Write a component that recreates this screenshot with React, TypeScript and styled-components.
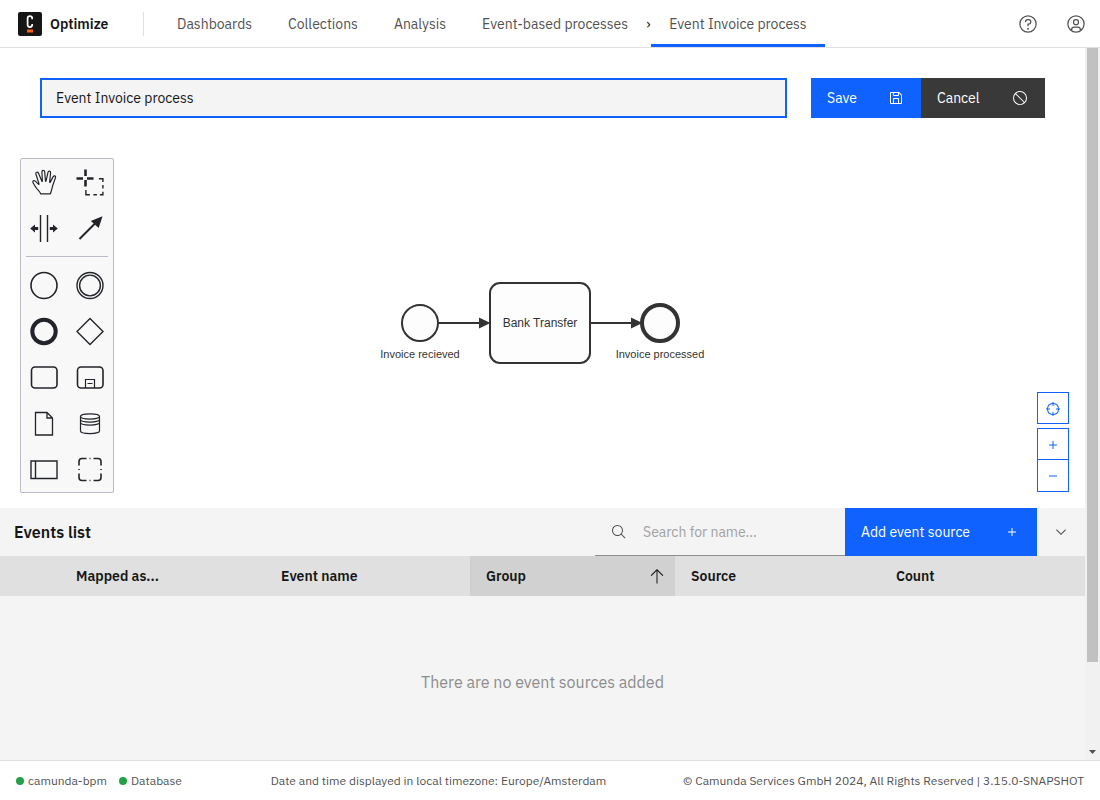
import React from 'react';
import styled, { createGlobalStyle } from 'styled-components';

const GlobalStyle = createGlobalStyle`
  *, *::before, *::after { box-sizing: border-box; }
  body {
    margin: 0;
    font-family: 'IBM Plex Sans', Roboto, 'Liberation Sans', sans-serif;
    font-size: 14px;
    line-height: 18px;
    color: #161616;
    background: #fff;
  }
  button, input { font: inherit; border-radius: 0; }
  a { color: inherit; text-decoration: none; }
`;

const Page = styled.div`
  display: flex;
  flex-direction: column;
  height: 100vh;
`;

const Header = styled.header`
  display: flex;
  align-items: center;
  flex: none;
  height: 48px;
  padding-left: 18px;
  border-bottom: 1px solid #e0e0e0;
`;

const Brand = styled.a`
  display: flex;
  align-items: center;
  gap: 8px;
  width: 125px;
  font-weight: 600;
`;

const Divider = styled.span`
  width: 1px;
  height: 24px;
  margin-right: 15px;
  background: #e0e0e0;
`;

const Nav = styled.nav`
  display: flex;
  align-self: stretch;
  flex: 1;
`;

const NavLink = styled.a<{ $active?: boolean }>`
  display: flex;
  align-items: center;
  padding: 3px 18px 0;
  border-bottom: 3px solid ${p => (p.$active ? '#0f62fe' : 'transparent')};
  color: #525252;
  white-space: nowrap;
`;

const Crumb = styled.span`
  display: flex;
  align-items: center;
  width: 5px;
`;

const HeaderButton = styled.button`
  display: grid;
  place-items: center;
  width: 48px;
  height: 48px;
  padding: 0;
  border: 0;
  background: none;
  color: #525252;
`;

const Body = styled.div`
  display: flex;
  flex: 1;
  min-height: 0;
`;

const Main = styled.main`
  display: flex;
  flex-direction: column;
  flex: 1;
  min-width: 0;
`;

const Scrollbar = styled.div`
  display: flex;
  flex-direction: column;
  justify-content: space-between;
  align-items: center;
  flex: none;
  width: 15px;
  padding-bottom: 6px;
  background: #f1f1f1;
`;

const Thumb = styled.div`
  width: 11px;
  height: 87%;
  background: #c1c1c1;
`;

const EditBar = styled.form`
  display: flex;
  gap: 24px;
  padding: 30px 40px 20px;
`;

const NameInput = styled.input`
  flex: 1;
  min-width: 0;
  height: 40px;
  padding: 0 14px;
  border: 2px solid #0f62fe;
  outline: 0;
  background: #f4f4f4;
  color: #161616;
`;

const Actions = styled.div`
  display: flex;
`;

const ActionButton = styled.button<{ $tone?: 'dark'; $tall?: boolean; $width: number }>`
  display: flex;
  align-items: center;
  justify-content: space-between;
  width: ${p => p.$width}px;
  height: ${p => (p.$tall ? 48 : 40)}px;
  padding: 0 17px 0 16px;
  border: 0;
  background: ${p => (p.$tone === 'dark' ? '#393939' : '#0f62fe')};
  color: #fff;
  white-space: nowrap;
`;

const Canvas = styled.section`
  position: relative;
  display: flex;
  align-items: center;
  justify-content: center;
  flex: 1;
  min-height: 370px;
`;

const Palette = styled.div`
  position: absolute;
  left: 20px;
  top: 20px;
  display: grid;
  grid-template-columns: 46px 46px;
  border: 1px solid #babac8;
  border-radius: 2px;
  background: #f8f8f8;
`;

const Tool = styled.button`
  height: 46px;
  padding: 0;
  border: 0;
  background: none;
  color: #22242a;

  svg { display: block; }
`;

const PaletteRule = styled.hr`
  grid-column: 1 / -1;
  height: 1px;
  margin: 5px;
  border: 0;
  background: #babac8;
`;

const ZoomControls = styled.div`
  position: absolute;
  right: 16px;
  bottom: 16px;
  display: flex;
  flex-direction: column;
`;

const ZoomButton = styled.button<{ $joined?: boolean; $apart?: boolean }>`
  display: grid;
  place-items: center;
  width: 32px;
  height: 32px;
  margin-bottom: ${p => (p.$apart ? 4 : 0)}px;
  padding: ${p => (p.$joined ? 0 : 2)}px 0 0;
  border: 1px solid #0f62fe;
  border-top-width: ${p => (p.$joined ? 0 : 1)}px;
  background: #fff;
  color: #0f62fe;
`;

const Events = styled.section`
  flex: none;
  background: #f4f4f4;
`;

const EventsBar = styled.div`
  display: flex;
  align-items: center;
  height: 48px;
  padding-left: 14px;
`;

const EventsTitle = styled.h2`
  flex: 1;
  margin: 0;
  font-size: 16px;
  font-weight: 600;
`;

const Search = styled.label`
  display: flex;
  align-items: center;
  gap: 16px;
  width: 250px;
  height: 48px;
  padding-left: 16px;
  border-bottom: 1px solid #8d8d8d;
  color: #525252;
`;

const SearchInput = styled.input`
  flex: 1;
  min-width: 0;
  padding: 0;
  border: 0;
  outline: 0;
  background: none;

  &::placeholder { color: #a2a2a2; opacity: 1; }
`;

const Table = styled.table`
  width: 100%;
  border-collapse: collapse;
  table-layout: fixed;
`;

const SelectCol = styled.col`
  width: 60px;
`;

const Th = styled.th<{ $sorted?: boolean }>`
  height: 40px;
  padding: 0 10px 0 16px;
  background: ${p => (p.$sorted ? '#d1d1d1' : '#e0e0e0')};
  font-weight: 600;
  text-align: left;
`;

const SortButton = styled.button`
  display: flex;
  align-items: center;
  justify-content: space-between;
  width: 100%;
  padding: 0;
  border: 0;
  background: none;
  color: inherit;
`;

const Empty = styled.td`
  height: 164px;
  padding: 8px 0 0;
  font-size: 16px;
  line-height: 24px;
  color: #8d8d8d;
  text-align: center;
`;

const Footer = styled.footer`
  display: flex;
  align-items: center;
  justify-content: space-between;
  flex: none;
  height: 40px;
  padding: 0 16px;
  border-top: 1px solid #e0e0e0;
  color: #525252;
  font-size: 12px;
  line-height: 16px;
  white-space: nowrap;
`;

const StatusList = styled.ul`
  display: flex;
  gap: 12px;
  margin: 0;
  padding: 0 12px 0 0;
  list-style: none;
`;

const Status = styled.li`
  display: flex;
  align-items: center;
  gap: 4px;

  &::before {
    content: '';
    width: 8px;
    height: 8px;
    border-radius: 50%;
    background: #24a148;
  }
`;

const Logo = () => (
  <svg width="24" height="24" viewBox="0 0 24 24" aria-hidden="true">
    <rect width="24" height="24" rx="2" fill="#161616" />
    <path d="M14.200 7.200V6.400a2.300 2.300 0 0 0-4.600 0v6.400a2.300 2.300 0 0 0 4.600 0v-.9" fill="none" stroke="#fff" strokeWidth="1.700" />
    <rect x="9" y="17.500" width="6" height="3" fill="#fc5d0d" />
  </svg>
);

const CarbonIcon = ({ size = 16, children }: { size?: number; children: React.ReactNode }) => (
  <svg width={size} height={size} viewBox="0 0 32 32" fill="currentColor" aria-hidden="true">
    {children}
  </svg>
);

const HelpIcon = () => (
  <CarbonIcon size={20}>
    <path d="M16 2a14 14 0 1 0 14 14A14 14 0 0 0 16 2Zm0 26a12 12 0 1 1 12-12 12 12 0 0 1-12 12Z" />
    <circle cx="16" cy="23.5" r="1.5" />
    <path d="M17 8h-1.5a4.49 4.49 0 0 0-4.5 4.5v.5h2v-.5a2.5 2.5 0 0 1 2.5-2.5H17a2.5 2.5 0 0 1 0 5h-2v4.5h2V17a4.5 4.5 0 0 0 0-9Z" />
  </CarbonIcon>
);

const UserIcon = () => (
  <CarbonIcon size={20}>
    <path d="M16 8a5 5 0 1 0 5 5 5 5 0 0 0-5-5Zm0 8a3 3 0 1 1 3-3 3 3 0 0 1-3 3Z" />
    <path d="M16 2a14 14 0 1 0 14 14A14 14 0 0 0 16 2Zm-6 24.38V25a3 3 0 0 1 3-3h6a3 3 0 0 1 3 3v1.38a11.9 11.9 0 0 1-12 0Zm13.99-1.45A5 5 0 0 0 19 20h-6a5 5 0 0 0-4.99 4.93 12 12 0 1 1 15.98 0Z" />
  </CarbonIcon>
);

const SaveIcon = () => (
  <CarbonIcon>
    <path d="m27.71 9.29-5-5A1 1 0 0 0 22 4H6a2 2 0 0 0-2 2v20a2 2 0 0 0 2 2h20a2 2 0 0 0 2-2V10a1 1 0 0 0-.29-.71ZM12 6h8v4h-8Zm8 20h-8v-8h8Zm2 0v-8a2 2 0 0 0-2-2h-8a2 2 0 0 0-2 2v8H6V6h4v4a2 2 0 0 0 2 2h8a2 2 0 0 0 2-2V6.41l4 4V26Z" />
  </CarbonIcon>
);

const ForbiddenIcon = () => (
  <CarbonIcon>
    <path d="M2 16A14 14 0 1 0 16 2 14 14 0 0 0 2 16Zm23.15 7.75L8.25 6.85a12 12 0 0 1 16.9 16.9ZM8.24 25.16a12 12 0 0 1-1.4-16.89l16.89 16.89a12 12 0 0 1-15.49 0Z" />
  </CarbonIcon>
);

const SearchIcon = () => (
  <CarbonIcon>
    <path d="m29 27.59-7.55-7.55a11 11 0 1 0-1.41 1.41L27.59 29ZM4 13a9 9 0 1 1 9 9 9 9 0 0 1-9-9Z" />
  </CarbonIcon>
);

const AddIcon = () => (
  <CarbonIcon>
    <path d="M17 15V8h-2v7H8v2h7v7h2v-7h7v-2Z" />
  </CarbonIcon>
);

const SubtractIcon = () => (
  <CarbonIcon>
    <path d="M8 15h16v2H8z" />
  </CarbonIcon>
);

const CenterIcon = () => (
  <CarbonIcon>
    <path d="M30 15h-2.05A12 12 0 0 0 17 4.05V2h-2v2.05A12 12 0 0 0 4.05 15H2v2h2.05A12 12 0 0 0 15 27.95V30h2v-2.05A12 12 0 0 0 27.95 17H30ZM17 25.95V22h-2v3.95A10 10 0 0 1 6.05 17H10v-2H6.05A10 10 0 0 1 15 6.05V10h2V6.05A10 10 0 0 1 25.95 15H22v2h3.95A10 10 0 0 1 17 25.95Z" />
  </CarbonIcon>
);

const ChevronDown = () => (
  <CarbonIcon>
    <path d="M16 22 6 12l1.4-1.4 8.6 8.6 8.6-8.6L26 12Z" />
  </CarbonIcon>
);

const ArrowUp = () => (
  <CarbonIcon>
    <path d="M16 2 3.400 14.600 5 16.200 15 6.100V31h2V6.100L27 16.200l1.600-1.600Z" />
  </CarbonIcon>
);

const toolGlyphs: [string, React.ReactNode][] = [
  ['Activate the hand tool', <path d="M19.700 34.800c-.8-1.900-2.100-3.400-3.700-4.900-1.500-1.600-2.700-3.900-4-6.300-.9-1.800 1-2.700 2.300-1.500l3.400 3.300.4-.3-3.200-10.100c-.5-1.900 1.900-2.500 2.600-.8l3.500 8.300.4-.2-.5-9.400c0-1.900 2.500-2 2.800-.1l.8 9.400h.5l2-8.900c.5-1.800 2.800-1.400 2.600.4l-1 9.500.5.200 3.100-5.800c.9-1.500 2.800-.7 2.300 1l-2.600 7.400c-.8 2.800-1.400 6-2.500 8.800Z" strokeWidth="1.200" strokeLinejoin="round" />],
  ['Activate the lasso tool', <><path d="M9.500 19.500H16m4 0h6.500M18.500 10.500V17m0 4v6.500" strokeWidth="2.600" /><path d="M18.900 31v4.700h4m3.500 0h3.500m3 0h3v-3m0-3.300v-3.300m0-3v-3.400h-4" strokeWidth="1.400" /></>],
  ['Activate the create/remove space tool', <><path d="M19.500 10v27M26.500 10v27" strokeWidth="1.400" /><path d="m9.200 23.500 4.800-4v2.400h3.200v3.200H14v2.400ZM36.800 23.500l-4.800-4v2.400h-3.200v3.200H32v2.400Z" fill="currentColor" stroke="none" /></>],
  ['Activate the global connect tool', <><path d="M12.500 34 28 18.500" strokeWidth="2" /><path d="M35.500 11.300 31.700 23 23.800 16Z" fill="currentColor" stroke="none" /></>],
];

const shapeGlyphs: [string, React.ReactNode][] = [
  ['Create start event', <circle cx="23" cy="23.500" r="13" />],
  ['Create intermediate event', <><circle cx="23" cy="23.500" r="13" strokeWidth="1.400" /><circle cx="23" cy="23.500" r="10.400" strokeWidth="1.400" /></>],
  ['Create end event', <circle cx="23" cy="23.500" r="11.700" strokeWidth="4" />],
  ['Create gateway', <path d="m23 10.500 13 13-13 13-13-13Z" strokeWidth="1.400" />],
  ['Create task', <rect x="10.500" y="13" width="25.500" height="21" rx="3.500" />],
  ['Create expanded sub-process', <><rect x="10.500" y="13" width="25.500" height="21" rx="3.500" /><path d="M18.500 34v-8.500h9V34M20.500 29.500h5" strokeWidth="1.200" /></>],
  ['Create data object reference', <path d="M14.500 12.500H26l5.500 5.500v17h-17ZM26 12.500V18h5.500" strokeWidth="1.300" />],
  ['Create data store reference', <path d="M13.500 16.500v14.500c0 3.400 19 3.400 19 0V16.500c0-3.600-19-3.600-19 0 0 3.400 19 3.400 19 0M13.500 19.500c0 3.400 19 3.400 19 0M13.500 22.500c0 3.400 19 3.400 19 0" strokeWidth="1.200" />],
  ['Create pool/participant', <path d="M10 15h26v17.500H10ZM14.500 15v17.500" strokeWidth="1.400" />],
  ['Create group', <path d="M12 19.500v-4a3 3 0 0 1 3-3h4.500m3 0h1m3 0H31a3 3 0 0 1 3 3v4m0 3.500v1m0 3.500v4a3 3 0 0 1-3 3h-4.500m-3 0h-1m-3 0H15a3 3 0 0 1-3-3v-4m0-3.500v-1" />],
];

const PaletteTools = ({ items }: { items: [string, React.ReactNode][] }) => (
  <>
    {items.map(([label, glyph]) => (
      <Tool key={label} type="button" aria-label={label} title={label}>
        <svg width="46" height="46" viewBox="0 0 46 46" fill="none" stroke="currentColor" strokeWidth="1.600">
          {glyph}
        </svg>
      </Tool>
    ))}
  </>
);

const Diagram = () => (
  <svg
    width="341"
    height="90"
    viewBox="0 0 341 90"
    fontFamily="'Liberation Sans', Arial, sans-serif"
    textAnchor="middle"
  >
    <g fill="#fdfdfd" stroke="#333" strokeWidth="2">
      <circle cx="48" cy="45" r="18" />
      <rect x="118" y="5" width="100" height="80" rx="10" />
      <path d="M66 45h50M219 45h42" />
      <circle cx="288" cy="45" r="18" strokeWidth="4" />
    </g>
    <path d="m107 39.500 11.500 5.500-11.500 5.500ZM259 39.500l11.500 5.500-11.500 5.500Z" fill="#333" />
    <g fill="#333">
      <text x="168" y="49" fontSize="12">Bank Transfer</text>
      <text x="48" y="80" fontSize="11">Invoice recieved</text>
      <text x="288" y="80" fontSize="11">Invoice processed</text>
    </g>
  </svg>
);

export default function App() {
  return (
    <Page>
      <GlobalStyle />
      <Header>
        <Brand href="#">
          <Logo />
          Optimize
        </Brand>
        <Divider />
        <Nav>
          <NavLink href="#dashboards">Dashboards</NavLink>
          <NavLink href="#collections">Collections</NavLink>
          <NavLink href="#analysis">Analysis</NavLink>
          <NavLink href="#events">Event-based processes</NavLink>
          <Crumb>›</Crumb>
          <NavLink href="#process" $active aria-current="page">Event Invoice process</NavLink>
        </Nav>
        <HeaderButton type="button" aria-label="Help"><HelpIcon /></HeaderButton>
        <HeaderButton type="button" aria-label="Profile"><UserIcon /></HeaderButton>
      </Header>

      <Body>
        <Main>
          <EditBar onSubmit={e => e.preventDefault()}>
            <NameInput aria-label="Process name" defaultValue="Event Invoice process" />
            <Actions>
              <ActionButton type="submit" $width={110}>Save<SaveIcon /></ActionButton>
              <ActionButton type="button" $tone="dark" $width={124}>Cancel<ForbiddenIcon /></ActionButton>
            </Actions>
          </EditBar>

          <Canvas aria-label="Process diagram">
            <Diagram />
            <Palette role="toolbar" aria-label="Diagram tools">
              <PaletteTools items={toolGlyphs} />
              <PaletteRule />
              <PaletteTools items={shapeGlyphs} />
            </Palette>
            <ZoomControls>
              <ZoomButton type="button" aria-label="Reset view" $apart><CenterIcon /></ZoomButton>
              <ZoomButton type="button" aria-label="Zoom in"><AddIcon /></ZoomButton>
              <ZoomButton type="button" aria-label="Zoom out" $joined><SubtractIcon /></ZoomButton>
            </ZoomControls>
          </Canvas>

          <Events>
            <EventsBar>
              <EventsTitle>Events list</EventsTitle>
              <Search>
                <SearchIcon />
                <SearchInput type="text" aria-label="Search for name" placeholder="Search for name..." />
              </Search>
              <ActionButton type="button" $tall $width={192}>Add event source<AddIcon /></ActionButton>
              <HeaderButton type="button" aria-label="Collapse events list"><ChevronDown /></HeaderButton>
            </EventsBar>
            <Table>
              <colgroup>
                <SelectCol />
                <col span={5} />
              </colgroup>
              <thead>
                <tr>
                  <Th aria-label="Selection" />
                  <Th scope="col">Mapped as...</Th>
                  <Th scope="col">Event name</Th>
                  <Th scope="col" $sorted aria-sort="ascending">
                    <SortButton type="button">Group<ArrowUp /></SortButton>
                  </Th>
                  <Th scope="col">Source</Th>
                  <Th scope="col">Count</Th>
                </tr>
              </thead>
              <tbody>
                <tr>
                  <Empty colSpan={6}>There are no event sources added</Empty>
                </tr>
              </tbody>
            </Table>
          </Events>
        </Main>
        <Scrollbar aria-hidden="true">
          <Thumb />
          <svg width="7" height="4" viewBox="0 0 7 4"><path d="M0 0h7L3.500 4Z" fill="#505050" /></svg>
        </Scrollbar>
      </Body>

      <Footer>
        <StatusList>
          <Status>camunda-bpm</Status>
          <Status>Database</Status>
        </StatusList>
        <span>Date and time displayed in local timezone: Europe/Amsterdam</span>
        <span>© Camunda Services GmbH 2024, All Rights Reserved | 3.15.0-SNAPSHOT</span>
      </Footer>
    </Page>
  );
}
